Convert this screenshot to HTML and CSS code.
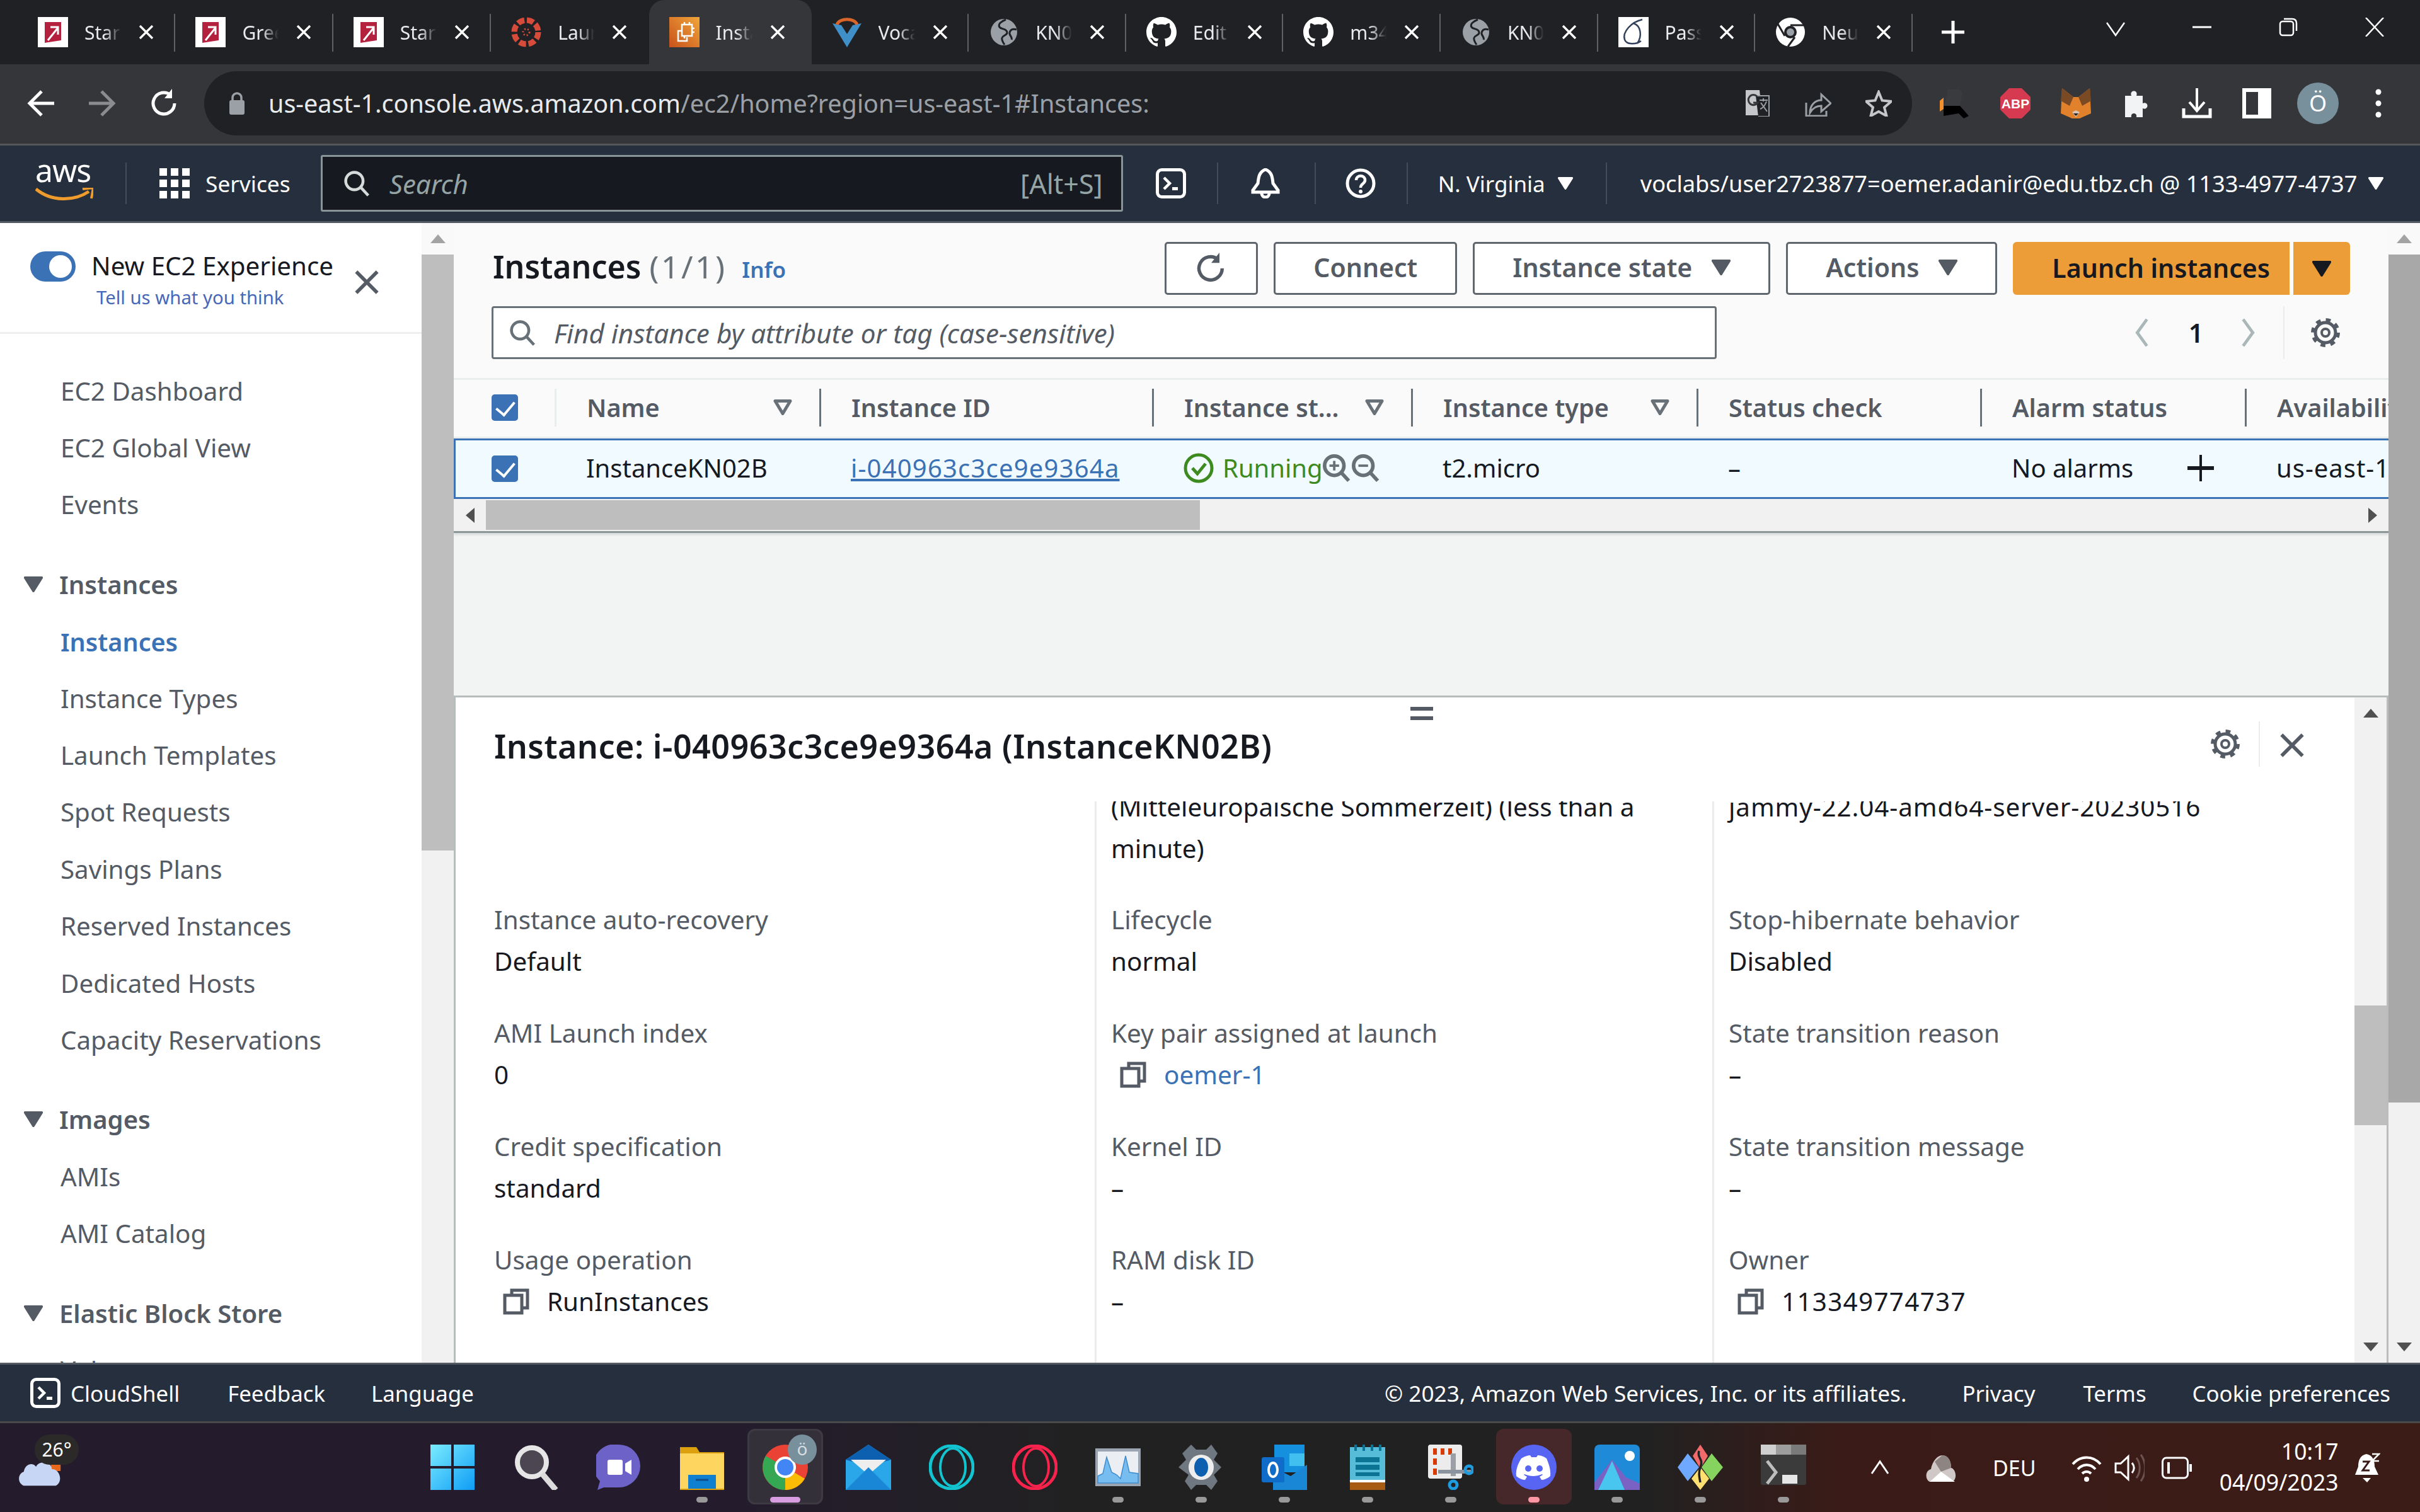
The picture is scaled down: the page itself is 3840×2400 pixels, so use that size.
FILE: index.html
```html
<!DOCTYPE html>
<html lang="en">
<head>
  <meta charset="UTF-8">
  <title>Instances | EC2 Management Console</title>
  <link rel="stylesheet" href="styles.css">
</head>
<body>
  <!-- shared icons -->
  <svg class="sprite" xmlns="http://www.w3.org/2000/svg">
    <symbol id="i-x" viewBox="0 0 24 24"><path d="M2 2l20 20M22 2L2 22" fill="none" stroke="currentColor" stroke-width="3.4"/></symbol>
    <symbol id="i-tri" viewBox="0 0 30 25"><path d="M2 0h26c2 0 2.500 1.500 1.800 3L17 23.500c-1 2-3 2-4 0L.2 3C-.5 1.500 0 0 2 0z" fill="currentColor"/></symbol>
    <symbol id="i-tri-o" viewBox="0 0 30 25"><path d="M3 2.500h24L15 22.500z" fill="none" stroke="currentColor" stroke-width="5" stroke-linejoin="round"/></symbol>
    <symbol id="i-red" viewBox="0 0 48 48"><rect width="48" height="48" fill="#fff"/><path d="M11 8h26v29l-26 4z" fill="#b3213f"/><path d="M16 37l16-20M20 16h12v12" fill="none" stroke="#fff" stroke-width="3"/></symbol>
    <symbol id="i-globe" viewBox="0 0 48 48"><circle cx="24" cy="24" r="21" fill="#9aa0a6"/><path d="M27 4c-7 3-13 7-10 12 3 4 11 2 12 8 1 5-7 5-8 9-1 3 2 8 4 11M44 20c-6-2-10 0-11 5-1 4 5 7 3 11" fill="none" stroke="#202124" stroke-width="3"/></symbol>
    <symbol id="i-gh" viewBox="0 0 16 16"><path fill="#fff" d="M8 0C3.580 0 0 3.580 0 8c0 3.540 2.290 6.530 5.470 7.590.4.070.55-.17.55-.38 0-.19-.01-.82-.01-1.490-2.010.37-2.530-.49-2.690-.94-.09-.23-.48-.94-.82-1.130-.28-.15-.68-.52-.01-.53.63-.01 1.080.58 1.230.82.72 1.210 1.870.87 2.330.66.07-.52.28-.87.51-1.070-1.780-.2-3.640-.89-3.640-3.950 0-.87.31-1.590.82-2.150-.08-.2-.36-1.020.08-2.120 0 0 .67-.21 2.200.82.64-.18 1.320-.27 2-.27.68 0 1.360.09 2 .27 1.530-1.040 2.200-.82 2.200-.82.44 1.100.16 1.920.08 2.120.51.56.82 1.270.82 2.150 0 3.070-1.870 3.750-3.650 3.950.29.25.54.73.54 1.480 0 1.070-.01 1.930-.01 2.200 0 .21.15.46.55.38A8.013 8.013 0 0016 8c0-4.420-3.580-8-8-8z"/></symbol>
    <symbol id="i-shell" viewBox="0 0 48 48"><rect x="2.500" y="2.500" width="43" height="43" rx="7" fill="none" stroke="#fff" stroke-width="5"/><path d="M13 15l9 9-9 9" fill="none" stroke="#fff" stroke-width="4.500"/><rect x="26" y="30" width="9" height="5" fill="#fff"/></symbol>
    <symbol id="i-gear" viewBox="0 0 48 48"><circle cx="24" cy="24" r="6" fill="none" stroke="currentColor" stroke-width="4"/><circle cx="24" cy="24" r="16" fill="none" stroke="currentColor" stroke-width="5"/><circle cx="24" cy="24" r="20" fill="none" stroke="currentColor" stroke-width="6" stroke-dasharray="7.500 8.200"/></symbol>
    <symbol id="i-copy" viewBox="0 0 42 42"><path d="M14 10V3h25v28h-8" fill="none" stroke="currentColor" stroke-width="5"/><rect x="3" y="11" width="27" height="28" fill="none" stroke="currentColor" stroke-width="5"/></symbol>
    <symbol id="i-search" viewBox="0 0 48 48"><circle cx="20" cy="20" r="15" fill="none" stroke="currentColor" stroke-width="5"/><path d="M31 31l13 14" stroke="currentColor" stroke-width="5"/></symbol>
    <symbol id="i-reload" viewBox="0 0 48 48"><path d="M40 24a17 17 0 1 1-6-13" fill="none" stroke="currentColor" stroke-width="5"/><path d="M36 1v15H24z" fill="currentColor"/></symbol>
    <symbol id="i-up" viewBox="0 0 24 14"><path d="M12 0l12 14H0z" fill="currentColor"/></symbol>
  </svg>

  <!-- browser tab strip -->
  <div class="tabbar">
    <div class="tab"><svg class="fav"><use href="#i-red"/></svg><span class="tab-title">Start</span><svg class="tab-x"><use href="#i-x"/></svg></div>
    <div class="tab"><svg class="fav"><use href="#i-red"/></svg><span class="tab-title">Greet</span><svg class="tab-x"><use href="#i-x"/></svg></div>
    <div class="tab"><svg class="fav"><use href="#i-red"/></svg><span class="tab-title">Start</span><svg class="tab-x"><use href="#i-x"/></svg></div>
    <div class="tab tab-nosep">
      <svg class="fav" viewBox="0 0 48 48"><circle cx="24" cy="24" r="19" fill="none" stroke="#d64b3a" stroke-width="9" stroke-dasharray="11 4"/><circle cx="24" cy="24" r="5" fill="none" stroke="#d64b3a" stroke-width="3" stroke-dasharray="2 3"/></svg>
      <span class="tab-title">Launch</span><svg class="tab-x"><use href="#i-x"/></svg>
    </div>
    <div class="tab tab-on">
      <svg class="fav" viewBox="0 0 48 48"><defs><linearGradient id="g-ec2" x1="0" y1="1" x2="1" y2="0"><stop offset="0" stop-color="#c8511b"/><stop offset="1" stop-color="#f0a63a"/></linearGradient></defs><rect width="48" height="48" fill="url(#g-ec2)"/><rect x="20" y="12" width="16" height="18" fill="none" stroke="#fff" stroke-width="2.500"/><path d="M20 22h-6v16h14v-6M24 8v4M32 8v4M24 30v4M40 18h-4M40 24h-4" fill="none" stroke="#fff" stroke-width="2.500"/></svg>
      <span class="tab-title">Instances</span><svg class="tab-x"><use href="#i-x"/></svg>
    </div>
    <div class="tab">
      <svg class="fav" viewBox="0 0 48 48"><path d="M1 10l23 38L47 10l-14 3-9 14-9-14z" fill="#3f8fc9"/><path d="M8 12c4-11 28-11 32 0" fill="none" stroke="#d8662a" stroke-width="5"/></svg>
      <span class="tab-title">Vocareum</span><svg class="tab-x"><use href="#i-x"/></svg>
    </div>
    <div class="tab"><svg class="fav"><use href="#i-globe"/></svg><span class="tab-title">KN02</span><svg class="tab-x"><use href="#i-x"/></svg></div>
    <div class="tab"><svg class="fav"><use href="#i-gh"/></svg><span class="tab-title">Edit</span><svg class="tab-x"><use href="#i-x"/></svg></div>
    <div class="tab"><svg class="fav"><use href="#i-gh"/></svg><span class="tab-title">m346</span><svg class="tab-x"><use href="#i-x"/></svg></div>
    <div class="tab"><svg class="fav"><use href="#i-globe"/></svg><span class="tab-title">KN02</span><svg class="tab-x"><use href="#i-x"/></svg></div>
    <div class="tab">
      <svg class="fav" viewBox="0 0 48 48"><rect width="48" height="48" fill="#fff"/><path d="M38 4C20 8 6 24 10 36c3 8 18 8 26 2M24 10c12 4 14 20 6 32" fill="none" stroke="#33415c" stroke-width="2.500"/></svg>
      <span class="tab-title">Passwords</span><svg class="tab-x"><use href="#i-x"/></svg>
    </div>
    <div class="tab">
      <svg class="fav" viewBox="0 0 48 48"><circle cx="24" cy="24" r="23" fill="#fff"/><circle cx="24" cy="24" r="10" fill="#202124"/><circle cx="24" cy="24" r="6" fill="#9aa0a6"/><path d="M24 13h22M15 30L4 11M31 32L20 47" stroke="#202124" stroke-width="3"/></svg>
      <span class="tab-title">Neuer Tab</span><svg class="tab-x"><use href="#i-x"/></svg>
    </div>
    <svg class="tab-new" viewBox="0 0 36 36"><path d="M18 0v36M0 18h36" stroke="#fff" stroke-width="5"/></svg>
    <div class="win-btns">
      <svg viewBox="0 0 30 30"><path d="M1 8l14 20L29 8" fill="none" stroke="#fff" stroke-width="2.500"/></svg>
      <svg viewBox="0 0 30 30"><path d="M0 15h30" stroke="#fff" stroke-width="3"/></svg>
      <svg viewBox="0 0 30 30"><rect x="2" y="6" width="21" height="22" rx="4" fill="none" stroke="#fff" stroke-width="2.500"/><path d="M8 2h13c5 0 7 3 7 7v12" fill="none" stroke="#fff" stroke-width="2.500"/></svg>
      <svg viewBox="0 0 30 30"><path d="M1 0l28 30M29 0L1 30" stroke="#fff" stroke-width="2.500"/></svg>
    </div>
  </div>

  <!-- browser toolbar -->
  <div class="toolbar">
    <svg class="tb-nav" viewBox="0 0 48 48"><path d="M44 24H6M24 5L5 24l19 19" fill="none" stroke="#fff" stroke-width="5"/></svg>
    <svg class="tb-nav tb-dim" viewBox="0 0 48 48"><path d="M4 24h38M24 5l19 19-19 19" fill="none" stroke="#8a8c8f" stroke-width="5"/></svg>
    <svg class="tb-nav tb-white" viewBox="0 0 48 48"><use href="#i-reload"/></svg>
    <div class="omnibox">
      <svg class="lock" viewBox="0 0 24 36"><rect y="13" width="24" height="23" rx="3" fill="#9aa0a6"/><path d="M5 14V9a7 7 0 0 1 14 0v5" fill="none" stroke="#9aa0a6" stroke-width="3.500"/></svg>
      <span class="url">us-east-1.console.aws.amazon.com<span class="url-dim">/ec2/home?region=us-east-1#Instances:</span></span>
      <span class="omni-icons">
        <svg viewBox="0 0 42 42"><path d="M2 0h22l4 40H2z" fill="#c4c6c9"/><path d="M18 9h21v33H22" fill="#202124" stroke="#9aa0a6" stroke-width="2"/><path d="M20 10a8 8 0 1 0 1 10h-7" fill="none" stroke="#35363a" stroke-width="3"/><path d="M24 16h13M30 13v5M35 18c-3 8-7 11-10 12M26 20l10 14" fill="none" stroke="#9aa0a6" stroke-width="2"/></svg>
        <svg viewBox="0 0 42 42"><path d="M2 20v21h32v-8M8 36c0-12 8-20 18-20V7l15 14-15 13v-9c-8 0-14 4-18 11z" fill="none" stroke="#9aa0a6" stroke-width="3"/></svg>
        <svg viewBox="0 0 42 42"><path d="M21 3l5.500 13.500L41 18 30 27.500 33.500 41 21 34 8.500 41 12 27.500 1 18l14.500-1.500z" fill="none" stroke="#c4c6c9" stroke-width="4"/></svg>
      </span>
    </div>
    <div class="ext-icons">
      <svg viewBox="0 0 48 48"><path d="M12 2h20l4 6-4 20H6l6-18z" fill="#3a3b3e"/><path d="M6 28h26l14 16-8 4-8-8-24 4z" fill="#000"/><path d="M0 20l6-5v18l-6 4z" fill="#f4902b"/></svg>
      <svg viewBox="0 0 48 48"><path d="M14 0h20l14 14v20L34 48H14L0 34V14z" fill="#d63a50"/><text x="24" y="32" class="abp-mark">ABP</text></svg>
      <svg viewBox="0 0 48 48"><path d="M2 0l18 14h8L46 0l2 40-18 8H18L0 40z" fill="#e2812b"/><path d="M2 0l18 14-6 14L0 20zM46 0L28 14l6 14 14-8z" fill="#7a4a24"/><path d="M18 38l6 8 6-8-6-3z" fill="#d7c1b3"/><path d="M20 40l4 4 4-4z" fill="#222"/></svg>
      <svg viewBox="0 0 48 48"><path d="M6 12h10c-4-10 12-10 8 0h10v12c10-4 10 12 0 8v14H24c2-8-10-8-8 0H6z" fill="#f1f3f4"/></svg>
      <svg viewBox="0 0 48 48"><path d="M24 0v34M12 22l12 14 12-14" fill="none" stroke="#fff" stroke-width="4"/><path d="M3 32v13h42V32" fill="none" stroke="#fff" stroke-width="5"/></svg>
      <svg viewBox="0 0 48 48"><rect x="3" y="3" width="40" height="42" fill="none" stroke="#fff" stroke-width="6"/><rect x="25" y="3" width="19" height="42" fill="#fff"/></svg>
      <span class="avatar">Ö</span>
      <svg viewBox="0 0 48 48"><circle cx="24" cy="6" r="4.500" fill="#fff"/><circle cx="24" cy="24" r="4.500" fill="#fff"/><circle cx="24" cy="42" r="4.500" fill="#fff"/></svg>
    </div>
  </div>

  <!-- aws console header -->
  <header class="awsnav">
    <div class="aws-logo">
      <span>aws</span>
      <svg viewBox="0 0 92 22"><path d="M1 2c24 20 60 20 84 4" fill="none" stroke="#f09c2c" stroke-width="5"/><path d="M75 2l17-2-3 17" fill="none" stroke="#f09c2c" stroke-width="4"/></svg>
    </div>
    <i class="nav-sep"></i>
    <svg class="grid-ico" viewBox="0 0 48 48"><path fill="#fff" d="M0 0h12v12H0zM18 0h12v12H18zM36 0h12v12H36zM0 18h12v12H0zM18 18h12v12H18zM36 18h12v12H36zM0 36h12v12H0zM18 36h12v12H18zM36 36h12v12H36z"/></svg>
    <span class="nav-services">Services</span>
    <div class="nav-search">
      <svg viewBox="0 0 48 48"><use href="#i-search"/></svg>
      <span class="ns-ph">Search</span>
      <span class="ns-key">[Alt+S]</span>
    </div>
    <svg class="nav-ico ni-shell"><use href="#i-shell"/></svg>
    <i class="nav-sep s2"></i>
    <svg class="nav-ico ni-bell" viewBox="0 0 48 48"><path d="M24 2c10 4 11 12 12 22l8 11v3H4v-3l8-11c1-10 2-18 12-22z" fill="none" stroke="#fff" stroke-width="5"/><path d="M18 40a6 6 0 0 0 12 0" fill="none" stroke="#fff" stroke-width="5"/></svg>
    <i class="nav-sep s3"></i>
    <svg class="nav-ico ni-help" viewBox="0 0 48 48"><circle cx="24" cy="24" r="21" fill="none" stroke="#fff" stroke-width="5"/><path d="M17 19c0-9 14-9 14 0 0 6-7 5-7 12" fill="none" stroke="#fff" stroke-width="4.500"/><circle cx="24" cy="37" r="3" fill="#fff"/></svg>
    <i class="nav-sep s4"></i>
    <span class="nav-region">N. Virginia</span>
    <svg class="nav-tri"><use href="#i-tri"/></svg>
    <i class="nav-sep s5"></i>
    <span class="nav-user">voclabs/user2723877=oemer.adanir@edu.tbz.ch @ 1133-4977-4737</span>
    <svg class="nav-tri t2"><use href="#i-tri"/></svg>
  </header>

  <main class="console">
    <!-- left navigation -->
    <aside class="sidebar">
      <div class="side-inner">
        <div class="side-head">
          <span class="toggle"><i></i></span>
          <div class="side-exp">
            <div class="exp-title">New EC2 Experience</div>
            <div class="exp-link">Tell us what you think</div>
          </div>
          <svg class="side-x"><use href="#i-x"/></svg>
        </div>
        <nav class="side-nav">
          <a>EC2 Dashboard</a>
          <a>EC2 Global View</a>
          <a>Events</a>
          <h4><svg><use href="#i-tri"/></svg>Instances</h4>
          <a class="on">Instances</a>
          <a>Instance Types</a>
          <a>Launch Templates</a>
          <a>Spot Requests</a>
          <a>Savings Plans</a>
          <a>Reserved Instances</a>
          <a>Dedicated Hosts</a>
          <a>Capacity Reservations</a>
          <h4><svg><use href="#i-tri"/></svg>Images</h4>
          <a>AMIs</a>
          <a>AMI Catalog</a>
          <h4><svg><use href="#i-tri"/></svg>Elastic Block Store</h4>
          <a>Volumes</a>
        </nav>
      </div>
      <div class="vbar vbar-side">
        <span class="vb-up"><svg><use href="#i-up"/></svg></span>
        <span class="vb-thumb"></span>
      </div>
    </aside>

    <section class="content">
      <div class="top-pane">
        <div class="inst-box">
          <div class="inst-head">
            <div class="head-row">
              <h1>Instances <span class="count">(1/1)</span></h1>
              <span class="info">Info</span>
              <div class="actions">
                <button class="btn btn-ico"><svg><use href="#i-reload"/></svg></button>
                <button class="btn">Connect</button>
                <button class="btn">Instance state<svg><use href="#i-tri"/></svg></button>
                <button class="btn">Actions<svg><use href="#i-tri"/></svg></button>
                <div class="launch">
                  <button class="btn-orange">Launch instances</button>
                  <button class="btn-orange caret"><svg><use href="#i-tri"/></svg></button>
                </div>
              </div>
            </div>
            <div class="filter-row">
              <div class="filter">
                <svg><use href="#i-search"/></svg>
                <span>Find instance by attribute or tag (case-sensitive)</span>
              </div>
              <div class="pager">
                <svg viewBox="0 0 24 48"><path d="M20 2L4 24l16 22" fill="none" stroke="#aab7b8" stroke-width="5"/></svg>
                <b>1</b>
                <svg viewBox="0 0 24 48"><path d="M4 2l16 22L4 46" fill="none" stroke="#aab7b8" stroke-width="5"/></svg>
                <i class="pg-sep"></i>
                <svg class="pg-gear"><use href="#i-gear"/></svg>
              </div>
            </div>
          </div>

          <div class="tbl-head">
            <div class="th-check"><span class="check"></span></div>
            <div class="th th-first">Name<svg><use href="#i-tri-o"/></svg></div>
            <div class="th">Instance ID</div>
            <div class="th">Instance st...<svg><use href="#i-tri-o"/></svg></div>
            <div class="th">Instance type<svg><use href="#i-tri-o"/></svg></div>
            <div class="th">Status check</div>
            <div class="th">Alarm status</div>
            <div class="th">Availability Zone</div>
          </div>
          <div class="tbl-row">
            <div class="td-check"><span class="check"></span></div>
            <div class="td">InstanceKN02B</div>
            <div class="td"><a class="inst-link">i-040963c3ce9e9364a</a></div>
            <div class="td td-run">
              <svg class="run-ico" viewBox="0 0 48 48"><circle cx="24" cy="24" r="21" fill="none" stroke="#3d8a1f" stroke-width="5"/><path d="M14 24l8 9 13-16" fill="none" stroke="#3d8a1f" stroke-width="5"/></svg>
              <span class="run-txt">Running</span>
              <svg class="zoom-ico" viewBox="0 0 48 48"><circle cx="20" cy="20" r="16" fill="none" stroke="#687078" stroke-width="6"/><path d="M32 32l12 13" stroke="#687078" stroke-width="6"/><path d="M12 20h16M20 12v16" stroke="#687078" stroke-width="4"/></svg>
              <svg class="zoom-ico" viewBox="0 0 48 48"><circle cx="20" cy="20" r="16" fill="none" stroke="#687078" stroke-width="6"/><path d="M32 32l12 13" stroke="#687078" stroke-width="6"/><path d="M12 20h16" stroke="#687078" stroke-width="4"/></svg>
            </div>
            <div class="td">t2.micro</div>
            <div class="td">–</div>
            <div class="td td-alarm">No alarms<svg viewBox="0 0 42 42"><path d="M21 0v42" stroke="#16191f" stroke-width="4"/><path d="M0 21h42" stroke="#16191f" stroke-width="6"/></svg></div>
            <div class="td td-az">us-east-1a</div>
          </div>
          <div class="hbar">
            <span class="hb-arrow"><svg class="rot-l"><use href="#i-up"/></svg></span>
            <span class="hb-thumb"></span>
            <span class="hb-arrow"><svg class="rot-r"><use href="#i-up"/></svg></span>
          </div>
        </div>
      </div>

      <!-- split panel -->
      <div class="split">
        <div class="split-main">
          <i class="split-grip"></i>
          <div class="split-head">
            <h2>Instance: i-040963c3ce9e9364a (InstanceKN02B)</h2>
            <svg class="sp-gear"><use href="#i-gear"/></svg>
            <i class="sp-sep"></i>
            <svg class="sp-x"><use href="#i-x"/></svg>
          </div>
          <div class="details">
            <div class="d-col">
              <div class="d-clip"></div>
              <div class="d-item"><div class="d-label">Instance auto-recovery</div><div class="d-val">Default</div></div>
              <div class="d-item"><div class="d-label">AMI Launch index</div><div class="d-val">0</div></div>
              <div class="d-item"><div class="d-label">Credit specification</div><div class="d-val">standard</div></div>
              <div class="d-item"><div class="d-label">Usage operation</div><div class="d-val d-copy"><svg><use href="#i-copy"/></svg>RunInstances</div></div>
            </div>
            <div class="d-col">
              <div class="d-clip">(Mitteleuropäische Sommerzeit) (less than a<br>minute)</div>
              <div class="d-item"><div class="d-label">Lifecycle</div><div class="d-val">normal</div></div>
              <div class="d-item"><div class="d-label">Key pair assigned at launch</div><div class="d-val d-copy"><svg><use href="#i-copy"/></svg><a>oemer-1</a></div></div>
              <div class="d-item"><div class="d-label">Kernel ID</div><div class="d-val">–</div></div>
              <div class="d-item"><div class="d-label">RAM disk ID</div><div class="d-val">–</div></div>
            </div>
            <div class="d-col">
              <div class="d-clip ami">jammy-22.04-amd64-server-20230516</div>
              <div class="d-item"><div class="d-label">Stop-hibernate behavior</div><div class="d-val">Disabled</div></div>
              <div class="d-item"><div class="d-label">State transition reason</div><div class="d-val">–</div></div>
              <div class="d-item"><div class="d-label">State transition message</div><div class="d-val">–</div></div>
              <div class="d-item"><div class="d-label">Owner</div><div class="d-val d-copy num"><svg><use href="#i-copy"/></svg>113349774737</div></div>
            </div>
          </div>
        </div>
        <div class="vbar vbar-split">
          <span class="vb-up"><svg><use href="#i-up"/></svg></span>
          <span class="vb-thumb"></span>
          <span class="vb-down"><svg><use href="#i-up"/></svg></span>
        </div>
      </div>
    </section>

    <div class="vbar vbar-page">
      <span class="vb-up"><svg><use href="#i-up"/></svg></span>
      <span class="vb-thumb"></span>
      <span class="vb-down"><svg><use href="#i-up"/></svg></span>
    </div>
  </main>

  <footer class="awsfoot">
    <svg class="foot-shell"><use href="#i-shell"/></svg>
    <span class="f-cloud">CloudShell</span>
    <span class="f-feed">Feedback</span>
    <span class="f-lang">Language</span>
    <span class="f-copy">© 2023, Amazon Web Services, Inc. or its affiliates.</span>
    <span class="f-priv">Privacy</span>
    <span class="f-terms">Terms</span>
    <span class="f-cook">Cookie preferences</span>
  </footer>

  <!-- windows taskbar -->
  <div class="taskbar">
    <div class="weather">
      <svg viewBox="0 0 74 50"><rect x="52" y="0" width="16" height="26" fill="#e8681c"/><path d="M8 50C-3 46-2 30 8 27c2-12 14-16 20-8 4-10 24-10 26 4 14 0 18 22 6 27z" fill="#c6d6f4"/></svg>
      <span class="temp">26°</span>
    </div>
    <div class="apps">
      <div class="app">
        <svg viewBox="0 0 72 72"><defs><linearGradient id="g-win" x1="0" y1="0" x2="1" y2="1"><stop offset="0" stop-color="#7becff"/><stop offset="1" stop-color="#0e9cf5"/></linearGradient></defs><path fill="url(#g-win)" d="M1 0h33v34H1zM38 0h33v34H38zM1 38h33v34H1zM38 38h33v34H38z"/></svg>
      </div>
      <div class="app">
        <svg viewBox="0 0 72 72"><circle cx="30" cy="28" r="23" fill="#4c4653" stroke="#e6e6e6" stroke-width="8"/><path d="M46 46l22 26" stroke="#dcdcdc" stroke-width="9"/></svg>
      </div>
      <div class="app">
        <svg viewBox="0 0 72 72"><path d="M36 0a34 34 0 0 1 0 68H12L2 72l4-14A34 34 0 0 1 36 0z" fill="#6d62c8"/><rect x="18" y="24" width="24" height="24" rx="3" fill="#fff"/><path d="M46 30l10-6v24l-10-6z" fill="#fff"/></svg>
      </div>
      <div class="app has-dot">
        <svg viewBox="0 0 72 72"><path d="M1 4h26l5 8h39v60H1z" fill="#dc9f0e"/><path d="M1 14h70v56H1z" fill="#fdd55f"/><path d="M14 48h44v22H14z" fill="#0f7fd0"/><path d="M26 56h20" stroke="#0c4f8c" stroke-width="3"/></svg>
      </div>
      <div class="app app-active has-pill">
        <svg viewBox="0 0 72 72"><circle cx="36" cy="36" r="36" fill="#ea4335"/><path d="M36 36L5 54a36 36 0 0 0 31 18z" fill="#34a853"/><path d="M36 36L5 54A36 36 0 0 1 5 18z" fill="#34a853"/><path d="M36 36l31 18a36 36 0 0 1-31 18z" fill="#fbbc05"/><circle cx="36" cy="36" r="17" fill="#fff"/><circle cx="36" cy="36" r="13" fill="#4285f4"/></svg>
        <span class="app-badge">ö</span>
      </div>
      <div class="app">
        <svg viewBox="0 0 72 72"><path d="M0 24L36 0l36 24v48H0z" fill="#2aa7e8"/><path d="M0 24L36 0l36 24-36 10z" fill="#0d5fb0"/><path d="M8 24h56L36 48z" fill="#eee"/><path d="M0 72l36-36 36 36z" fill="#1a86d6"/></svg>
      </div>
      <div class="app">
        <svg viewBox="0 0 72 72"><ellipse cx="36" cy="36" rx="34" ry="34" fill="none" stroke="#12c4cf" stroke-width="5"/><ellipse cx="38" cy="36" rx="20" ry="30" fill="none" stroke="#12c4cf" stroke-width="4"/></svg>
      </div>
      <div class="app">
        <svg viewBox="0 0 72 72"><ellipse cx="36" cy="36" rx="34" ry="34" fill="none" stroke="#f7234c" stroke-width="5"/><ellipse cx="38" cy="36" rx="20" ry="30" fill="none" stroke="#f7234c" stroke-width="4"/></svg>
      </div>
      <div class="app has-dot">
        <svg viewBox="0 0 72 60"><rect x="0" y="0" width="72" height="60" fill="#9aa5b1"/><rect x="4" y="5" width="64" height="50" fill="#ebeef2"/><path d="M4 44l8-4 6-26 8 24 8 4 6 6 8-36 6 26 14 2v15H4z" fill="#78bdf0" stroke="#3e8dd0" stroke-width="1.500"/></svg>
      </div>
      <div class="app has-dot">
        <svg viewBox="0 0 72 72"><path d="M20 0l8 8h16l8-8 10 14-6 10 12 12-12 12 6 10-10 14-8-8H28l-8 8-10-14 6-10L0 36l12-12-6-10z" fill="#6f7780"/><circle cx="36" cy="36" r="20" fill="#eee"/><ellipse cx="36" cy="36" rx="11" ry="15" fill="#0d5fb0"/></svg>
      </div>
      <div class="app has-dot">
        <svg viewBox="0 0 72 72"><rect x="20" y="0" width="48" height="44" fill="#1490df"/><rect x="44" y="14" width="24" height="20" fill="#41c0f0"/><path d="M18 36l28 14 26-18v40H18z" fill="#1a86d6"/><rect x="0" y="20" width="36" height="40" rx="3" fill="#0f6cc8"/><ellipse cx="18" cy="40" rx="7" ry="11" fill="none" stroke="#fff" stroke-width="4"/></svg>
      </div>
      <div class="app has-dot">
        <svg viewBox="0 0 72 72"><rect x="8" y="4" width="56" height="56" fill="#57bcd8"/><rect x="8" y="60" width="56" height="12" fill="#a85b12"/><path fill="#fff" d="M8 56h56v4H8z"/><path fill="#0b7494" d="M17 20h38v8H17zM17 32h38v8H17zM17 44h38v6H17zM15 0h4v10h-4zM28 0h4v10h-4zM41 0h4v10h-4zM54 0h4v10h-4z"/></svg>
      </div>
      <div class="app has-dot">
        <svg viewBox="0 0 72 72"><rect x="0" y="0" width="54" height="54" rx="4" fill="#ececec"/><path fill="#d83b01" d="M8 6h6v10H8zM20 6h6v10h-6zM32 6h6v10h-6zM8 22h6v10H8zM8 38h6v10H8z"/><path d="M36 14h8v36H36z" fill="#9aa0a6"/><path d="M16 40h52v6H16z" fill="#8b949e"/><circle cx="65" cy="40" r="6" fill="none" stroke="#1f9be0" stroke-width="5"/><circle cx="40" cy="64" r="6" fill="none" stroke="#1f9be0" stroke-width="5"/></svg>
      </div>
      <div class="app app-attn has-dot">
        <svg viewBox="0 0 72 72"><circle cx="36" cy="36" r="36" fill="#5865f2"/><path fill="#fff" d="M16 22c6-4 12-5 14-5l2 3h8l2-3c3 0 9 1 14 5 4 9 7 19 6 28-5 4-10 6-14 6l-3-5 5-3-1-1c-10 4-18 4-28 0l-1 1 5 3-3 5c-4 0-9-2-14-6-1-9 2-19 8-28z"/><circle cx="27" cy="38" r="5" fill="#5865f2"/><circle cx="45" cy="38" r="5" fill="#5865f2"/></svg>
      </div>
      <div class="app has-dot">
        <svg viewBox="0 0 72 72"><rect width="72" height="72" rx="8" fill="#1f8ad8"/><path d="M0 72V60l28-36 22 28 22 10v10z" fill="#7a62c4"/><path d="M6 72l22-46 20 46z" fill="#49c6ef"/><circle cx="56" cy="18" r="8" fill="#fff"/></svg>
      </div>
      <div class="app has-dot">
        <svg viewBox="0 0 72 72"><path d="M36 0l12 18-12 20-12-20z" fill="#f36a6a"/><path d="M16 20l18 22-18 22L0 42z" fill="#6ea8ff" transform="translate(0 -6)"/><path d="M54 14l18 22-18 22-16-22z" fill="#86d35f"/><path d="M36 36l14 18-14 18-14-18z" fill="#ffe070"/><path d="M34 10c-4 12 8 12 2 26-3 8-2 14 0 24" fill="none" stroke="#222" stroke-width="3.500"/></svg>
      </div>
      <div class="app has-dot">
        <svg viewBox="0 0 72 72"><rect y="0" width="72" height="64" rx="3" fill="#3b3b3b"/><path fill="#cfcfcf" d="M0 0h24v16H0z"/><path fill="#9d9d9d" d="M24 0h24v16H24z"/><path fill="#7a7a7a" d="M48 0h24v16H48z"/><path d="M10 26l14 18-14 18" fill="none" stroke="#bdbdbd" stroke-width="5"/><rect x="34" y="48" width="24" height="14" fill="#e6e6e6"/></svg>
      </div>
    </div>
    <div class="tray">
      <svg class="tr-chev" viewBox="0 0 30 30"><path d="M2 24L15 5l13 19" fill="none" stroke="#fff" stroke-width="3"/></svg>
      <svg class="tr-cloud" viewBox="0 0 48 48"><path d="M6 46C-2 42-1 28 8 26 10 14 18 4 26 4c10 0 14 10 14 20 8 2 10 18 2 22z" fill="#cfc8c6"/><path d="M6 46l18-16 22 16z" fill="#fff"/><path d="M26 4c10 0 14 10 14 20L24 30 14 14z" fill="#8e8583"/></svg>
      <span class="tr-lang">DEU</span>
      <svg class="tr-ico" viewBox="0 0 48 48"><path d="M2 18c12-14 32-14 44 0M10 26c8-9 20-9 28 0M17 33c4-4 10-4 14 0" fill="none" stroke="#fff" stroke-width="4"/><circle cx="24" cy="42" r="4" fill="#fff"/></svg>
      <svg class="tr-ico" viewBox="0 0 48 48"><path d="M2 17h8L22 6v36L10 31H2z" fill="none" stroke="#fff" stroke-width="3"/><path d="M28 16c4 5 4 11 0 16" fill="none" stroke="#fff" stroke-width="3"/><path d="M35 8c7 9 7 23 0 32M42 3c9 12 9 30 0 42" fill="none" stroke="#6d5350" stroke-width="3"/></svg>
      <svg class="tr-ico tr-batt" viewBox="0 0 48 48"><rect x="1.500" y="8" width="40" height="32" rx="6" fill="none" stroke="#fff" stroke-width="3"/><path d="M9 15h4v18H9z" fill="#fff"/><path d="M44 18h4v12h-4z" fill="#fff"/></svg>
      <div class="clock"><span>10:17</span><span>04/09/2023</span></div>
      <span class="tr-bell">
        <svg viewBox="0 0 40 48"><path d="M18 2c10 2 13 10 13 20l6 13H0l5-13C5 12 8 4 18 2z" fill="#fff"/><path d="M12 40h13l-6 7z" fill="#fff"/><path d="M12 14h10L12 28h11" fill="none" stroke="#3a1b17" stroke-width="3"/><path d="M27 2h11L27 13h11" fill="none" stroke="#fff" stroke-width="2.500"/></svg>
      </span>
    </div>
  </div>
</body>
</html>
```

FILE: styles.css
```css
/* Basic reset */
* { margin: 0; padding: 0; box-sizing: border-box; }
html, body { width: 3840px; height: 2400px; overflow: hidden; }
body {
  display: flex; flex-direction: column;
  font-family: "Noto Sans", "Open Sans", sans-serif;
  font-size: 40.4px; color: #16191f; background: #fff;
}
svg { display: block; flex: none; }
.sprite { display: none; }
button { font-family: inherit; cursor: pointer; }

/* Tab strip */
.tabbar { height: 102px; flex: none; background: #202124; display: flex; align-items: stretch; padding-left: 28px; color: #fff; }
.tab { position: relative; width: 249.6px; flex: none; display: flex; align-items: center; padding-left: 32px; }
.tab:nth-child(-n+4) { width: 250.4px; }
.tab::after { content: ""; position: absolute; right: 0; top: 22px; height: 60px; width: 2px; background: #5f6166; }
.tab-nosep::after, .tab-on::after { display: none; }
.tab-on { width: 258px; background: #35363a; border-radius: 24px 24px 0 0; }
.fav { width: 48px; height: 48px; }
.tab-title {
  width: 58px; margin-left: 26px; margin-right: 4px; overflow: hidden; white-space: nowrap;
  font-size: 30px; color: #e8eaed;
  mask-image: linear-gradient(90deg, #000 55%, transparent 100%);
}
.tab-x { width: 24px; height: 24px; margin-left: 24px; color: #fff; }
.tab-new { width: 36px; height: 36px; margin: 33px 0 0 46px; }
.win-btns { display: flex; margin-left: 225px; padding-top: 28px; gap: 107px; }
.win-btns svg { width: 30px; height: 30px; }

/* Toolbar */
.toolbar { height: 129px; flex: none; background: #35363a; border-bottom: 3px solid #55575b; display: flex; align-items: center; padding: 0 0 3px 42px; }
.tb-nav { width: 48px; height: 48px; margin-right: 47px; }
.tb-white { color: #fff; margin-left: 5px; margin-right: 39px; }
.omnibox { width: 2710px; height: 102px; border-radius: 51px; background: #202124; display: flex; align-items: center; padding-left: 40px; }
.lock { width: 24px; height: 36px; }
.url { margin-left: 38px; font-size: 39.5px; color: #e8eaed; white-space: nowrap; }
.url-dim { color: #9aa0a6; }
.omni-icons { margin-left: auto; display: flex; gap: 54px; padding-right: 32px; }
.omni-icons svg { width: 42px; height: 42px; }
.ext-icons { display: flex; align-items: center; gap: 48px; margin-left: 44px; }
.ext-icons svg { width: 48px; height: 48px; }
.avatar { width: 66px; height: 66px; border-radius: 50%; background: #78909c; color: #fff; text-align: center; line-height: 66px; font-size: 36px; margin: 0 -9px; }
.abp-mark { font-size: 21px; font-weight: 700; fill: #fff; text-anchor: middle; font-family: "Liberation Sans", sans-serif; }

/* Console header */
.awsnav { height: 123px; flex: none; background: #252f3e; border-bottom: 3px solid #545b64; display: flex; align-items: center; color: #fff; padding-left: 56px; font-size: 35.3px; }
.aws-logo { width: 92px; height: 62px; position: relative; line-height: 36px; font-size: 50px; }
.aws-logo span { display: block; height: 38px; margin-top: -8px; letter-spacing: -1px; }
.aws-logo svg { width: 92px; height: 22px; margin-top: 8px; }
.nav-sep { width: 2px; height: 66px; background: #414d5c; flex: none; margin-left: 51px; }
.grid-ico { width: 48px; height: 48px; margin-left: 52px; }
.nav-services { margin-left: 25px; }
.nav-search { width: 1273px; height: 90px; margin-left: 48px; background: #16191f; border: 3px solid #879596; border-radius: 3px; display: flex; align-items: center; padding-left: 32px; color: #d5dbdb; }
.nav-search svg { width: 44px; height: 44px; }
.ns-ph { margin-left: 30px; font-style: italic; font-size: 42px; color: #95a5a6; }
.ns-key { margin-left: auto; padding-right: 29px; font-size: 43px; color: #95a5a6; }
.nav-ico { width: 48px; height: 48px; }
.ni-shell { margin-left: 52px; }
.s2 { margin-left: 49px; }
.ni-bell { margin-left: 51px; }
.s3 { margin-left: 54px; }
.ni-help { margin-left: 47px; }
.s4 { margin-left: 49px; }
.nav-region { margin-left: 48px; font-size: 35px; }
.nav-tri { width: 24px; height: 20px; margin-left: 20px; color: #fff; }
.s5 { margin-left: 52px; }
.nav-user { margin-left: 53px; white-space: nowrap; font-size: 36.2px; }
.t2 { margin-left: 18px; }

/* Main area */
.console { height: 1809px; flex: none; display: flex; overflow: hidden; }
.sidebar { width: 720px; flex: none; display: flex; background: #fff; }
.side-inner { width: 669px; overflow: hidden; }
.side-head { height: 176px; border-bottom: 3px solid #eeeeee; display: flex; position: relative; padding: 45px 0 0 48px; }
.toggle { width: 72px; height: 48px; border-radius: 24px; background: #3b72b5; display: block; position: relative; }
.toggle i { position: absolute; right: 6px; top: 6px; width: 36px; height: 36px; background: #fff; border-radius: 50%; }
.side-exp { margin-left: 25px; }
.exp-title { font-size: 40.3px; line-height: 50px; margin-top: -2px; }
.exp-link { font-size: 29.3px; line-height: 50px; margin-left: 8px; color: #4767b8; }
.side-x { position: absolute; left: 562px; top: 74px; width: 40px; height: 40px; color: #545b64; }
.side-nav { padding-top: 45px; }
.side-nav a, .side-nav h4 { display: flex; align-items: center; height: 90.4px; font-size: 40.3px; color: #545b64; white-space: nowrap; }
.side-nav a { padding-left: 96px; }
.side-nav a.on { color: #3b72b5; font-weight: 600; font-size: 39.5px; padding-top: 2px; }
.side-nav h4 { font-weight: 600; margin-top: 36px; padding-left: 38px; font-size: 40px; }
.side-nav h4 svg { width: 30px; height: 25px; margin-right: 26px; color: #545b64; }

/* Scrollbars */
.vbar { flex: none; display: flex; flex-direction: column; align-items: center; background: #f1f1f1; position: relative; color: #505050; }
.vb-up, .vb-down { display: flex; align-items: center; justify-content: center; width: 100%; height: 50px; flex: none; }
.vb-up svg, .vb-down svg { width: 24px; height: 14px; }
.vb-down { position: absolute; bottom: 0; left: 0; }
.vb-down svg { transform: rotate(180deg); }
.vb-thumb { display: block; width: 100%; background: #bebebe; }
.vbar-side { width: 51px; }
.vbar-side .vb-up { color: #a3a3a3; background: #f9f9f9; }
.vbar-side .vb-thumb { height: 946px; }
.vbar-page { width: 50px; }
.vbar-page .vb-up { color: #a3a3a3; background: #f9f9f9; }
.vbar-page .vb-thumb { height: 1346px; background: #a8a8a8; }
.vbar-split { width: 54px; border-right: 3px solid #b9bdbd; }
.vbar-split .vb-thumb { height: 190px; margin-top: 439px; }

/* Instances pane */
.content { flex: 1; min-width: 0; display: flex; flex-direction: column; }
.top-pane { height: 750px; flex: none; background: #f2f3f3; }
.inst-box { height: 492px; background: #fafafa; border-bottom: 3px solid #8d9696; box-shadow: 0 3px 3px #d5dbdb; }
.inst-head { height: 249px; padding: 30px 61px 0 60px; border-bottom: 3px solid #eaeded; }
.head-row { display: flex; align-items: center; height: 84px; }
h1 { font-size: 50px; font-weight: 600; line-height: 84px; margin: -6px 0 0 2px; }
.count { font-weight: 400; color: #687078; letter-spacing: 3.4px; }
.info { font-size: 35px; font-weight: 600; color: #3b72b5; margin-left: 24px; padding-top: 2px; }
.actions { display: flex; gap: 25px; margin-left: auto; }
.btn { height: 84px; background: #fff; border: 3px solid #5f666e; border-radius: 5px; display: flex; align-items: center; padding: 0 60px 3px; font-size: 41px; font-weight: 600; color: #545b64; gap: 31px; line-height: 1; }
.btn svg { width: 30px; height: 25px; }
.btn-ico { width: 148px; padding: 0; justify-content: center; }
.btn-ico svg { width: 52px; height: 52px; color: #545b64; }
.launch { display: flex; gap: 6px; }
.btn-orange { height: 84px; border: 0; background: #ec9d38; color: #16191f; font-size: 41px; font-weight: 600; padding: 0 31px 3px 62px; border-radius: 6px 0 0 6px; }
.btn-orange.caret { width: 90px; padding: 0; border-radius: 0 6px 6px 0; display: flex; align-items: center; justify-content: center; }
.caret svg { width: 30px; height: 25px; }
.filter-row { display: flex; margin-top: 18px; }
.filter { width: 1944px; height: 84px; background: #fff; border: 3px solid #687078; border-radius: 4px; display: flex; align-items: center; padding-left: 24px; color: #687078; }
.filter svg { width: 44px; height: 44px; }
.filter span { margin-left: 28px; font-style: italic; font-size: 42.2px; color: #545b64; }
.pager { margin-left: auto; margin-right: 15px; display: flex; align-items: center; height: 84px; }
.pager svg { width: 24px; height: 46px; }
.pager b { width: 146px; text-align: center; font-size: 41px; font-weight: 600; margin: 0 -1px; padding-left: 3px; }
.pg-sep { width: 2px; height: 84px; background: #eaeded; margin-left: 44px; }
.pager .pg-gear { width: 48px; height: 48px; margin-left: 41px; color: #545b64; }

/* Table */
.tbl-head, .tbl-row { display: grid; grid-template-columns: 160px 420px 528px 411px 453px 450px 420px 228px; overflow: hidden; }
.tbl-head { height: 93px; padding-bottom: 3px; border-bottom: 3px solid #eaeded; align-items: center; }
.th-check, .td-check { padding-left: 60px; }
.check { display: block; width: 42px; height: 42px; border-radius: 5px; background: #3b72b5; position: relative; }
.check::after { content: ""; position: absolute; left: 13px; top: 5px; width: 14px; height: 24px; border: solid #fff; border-width: 0 4px 4px 0; transform: rotate(40deg); }
.th { height: 60px; border-left: 3px solid #687078; padding: 0 43px 0 48px; display: flex; align-items: center; justify-content: space-between; font-weight: 600; font-size: 39.6px; color: #545b64; white-space: nowrap; overflow: hidden; }
.th-first { border-left-color: #eaeded; }
.th svg { width: 30px; height: 25px; color: #687078; }
.tbl-row { height: 96px; padding-bottom: 3px; background: #f1faff; align-items: center; box-shadow: inset 0 3px #3b72b5, inset 0 -3px #3b72b5, inset 3px 0 #3b72b5; }
.td { padding-left: 50px; white-space: nowrap; font-size: 40px; }
.td-check { margin-top: 3px; }
.td-az { letter-spacing: 1px; }
.inst-link { color: #3b72b5; text-decoration: underline; letter-spacing: 1.2px; }
.td-run { display: flex; align-items: center; color: #3d8a1f; }
.run-ico { width: 48px; height: 48px; margin-right: 14px; }
.run-txt { margin-right: -5px; }
.zoom-ico { width: 46px; height: 46px; }
.zoom-ico:nth-of-type(2) { margin-left: 4px; }
.td-alarm { display: flex; align-items: center; }
.td-alarm svg { width: 42px; height: 42px; margin-left: 86px; }
.hbar { height: 51px; display: flex; align-items: center; background: #f1f1f1; }
.hb-arrow { width: 51px; height: 100%; display: flex; align-items: center; justify-content: center; color: #505050; }
.hb-arrow svg { width: 24px; height: 14px; }
.rot-l { transform: rotate(-90deg); }
.rot-r { transform: rotate(90deg); }
.hb-thumb { width: 1133px; height: 47px; background: #bebebe; margin-right: auto; }

/* Split panel */
.split { flex: 1; min-height: 0; display: flex; background: #fff; border-top: 3px solid #b7bdbd; border-left: 3px solid #b7bdbd; position: relative; }
.split-main { flex: 1; min-width: 0; display: flex; flex-direction: column; position: relative; }
.split-grip { position: absolute; left: 1515px; top: 15px; width: 36px; height: 21px; border: solid #545b64; border-width: 6px 0; }
.split-head { height: 165px; flex: none; display: flex; align-items: flex-start; padding: 43px 0 0 61px; }
h2 { font-size: 52px; font-weight: 600; line-height: 68px; letter-spacing: .45px; }
.sp-gear { width: 48px; height: 48px; color: #545b64; margin: 7px 0 0 auto; }
.sp-sep { width: 2px; height: 72px; background: #eaeded; margin: -5px 0 0 29px; }
.sp-x { width: 40px; height: 40px; color: #545b64; margin: 13px 79px 0 31px; }
.details { flex: 1; min-height: 0; display: grid; grid-template-columns: 1014px 980px 1fr; overflow: hidden; }
.d-col { overflow: hidden; padding-left: 23px; border-left: 3px solid #eaeded; }
.d-col:first-child { padding-left: 61px; border-left: 0; }
.d-clip { height: 132px; margin-top: -24px; margin-bottom: 47px; line-height: 66px; white-space: nowrap; }
.d-item { margin-bottom: 48px; }
.d-label { line-height: 66px; color: #545b64; white-space: nowrap; }
.d-val { line-height: 66px; white-space: nowrap; }
.d-copy { display: flex; align-items: center; padding-left: 14px; }
.d-copy svg { width: 42px; height: 42px; margin-right: 28px; color: #545b64; }
.d-copy a { color: #3b72b5; }
.num { letter-spacing: 1.3px; }
.ami { letter-spacing: .9px; }

/* Footer */
.awsfoot { height: 93px; flex: none; background: #252f3e; border-top: 3px solid #545b64; display: flex; align-items: center; color: #fff; font-size: 34.8px; white-space: nowrap; padding-left: 48px; }
.foot-shell { width: 48px; height: 48px; }
.f-cloud { margin-left: 16px; }
.f-feed { margin-left: 76px; }
.f-lang { margin-left: 73px; }
.f-copy { margin-left: auto; font-size: 35.2px; }
.f-priv { margin-left: 88px; }
.f-terms { margin-left: 76px; }
.f-cook { margin-left: 73px; margin-right: 47px; }

/* Taskbar */
.taskbar {
  height: 144px; flex: none; display: flex; align-items: flex-start;
  border-top: 3px solid #4a4a4a; color: #fff;
  background: linear-gradient(90deg, #241c2d 0, #241c2d 30%, #212121 45%, #212121 68%, #3a1b17 76%, #3b1c17 100%);
}
.weather { width: 652px; flex: none; position: relative; height: 141px; }
.weather svg { position: absolute; left: 30px; top: 50px; width: 72px; height: 50px; }
.temp { position: absolute; left: 55px; top: 18px; width: 70px; height: 48px; border-radius: 24px; background: #2b2a28; font-size: 30px; line-height: 48px; text-align: center; }
.apps { display: flex; height: 141px; padding-top: 9px; }
.app { position: relative; width: 120px; height: 120px; margin: 0 6px; padding: 25px 24px 0; border-radius: 12px; }
.app svg { width: 72px; height: 72px; }
.app-active { background: #33303a; box-shadow: inset 0 0 0 3px #3d3a44; }
.app-attn { background: #47282a; }
.has-dot::after, .has-pill::after { content: ""; position: absolute; left: 51px; bottom: 3px; width: 18px; height: 9px; border-radius: 5px; background: #999; }
.has-pill::after { left: 36px; width: 48px; background: #d89de0; }
.app-attn::after { background: #ff98a4; }
.app-badge { position: absolute; left: 64px; top: 9px; width: 46px; height: 48px; border-radius: 50%; background: #78909c; color: #d8dde0; text-align: center; line-height: 44px; font-size: 28px; }
.tray { display: flex; align-items: center; height: 141px; margin-left: 72px; }
.tr-chev { width: 30px; height: 30px; }
.tr-cloud { width: 48px; height: 48px; margin-left: 58px; }
.tr-lang { margin-left: 58px; font-size: 34px; }
.tr-ico { width: 48px; height: 48px; margin-left: 20px; }
.tr-lang + .tr-ico { margin-left: 56px; }
.tr-batt { margin-left: 27px; }
.clock { width: 196px; margin: -4px 0 0 37px; display: flex; flex-direction: column; align-items: flex-end; font-size: 35.5px; line-height: 49px; white-space: nowrap; }
.tr-bell { margin-left: 26px; }
.tr-bell svg { width: 40px; height: 48px; }
```
